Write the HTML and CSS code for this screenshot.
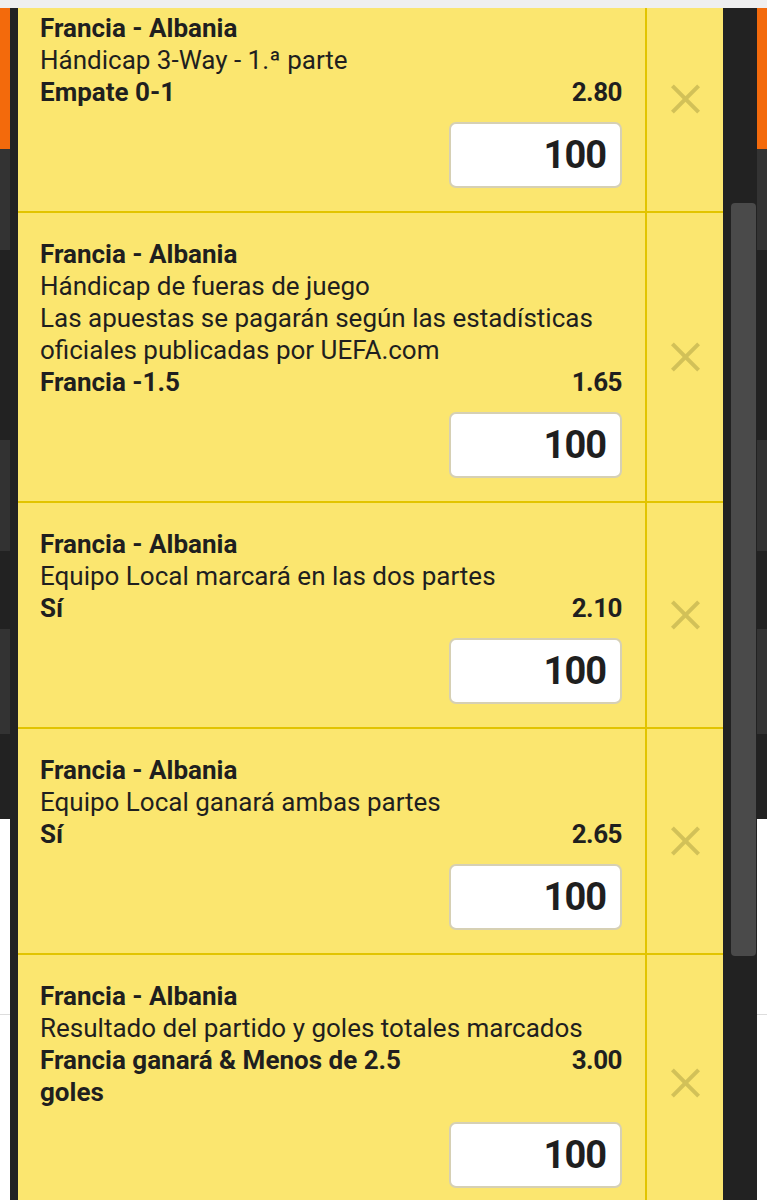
FILE: index.html
```html
<!DOCTYPE html>
<html lang="es">
<head>
  <meta charset="UTF-8" />
  <meta name="viewport" content="width=device-width, initial-scale=1" />
  <title>Boleto de apuestas</title>
  <link rel="stylesheet" href="styles.css">
</head>
<body>

  <div class="topbar"></div>

  <!-- pagina de fondo, oscurecida por el boleto -->
  <div class="page">
    <div class="band orange"></div>
    <div class="band b1"></div>
    <div class="band b2"></div>
    <div class="band b3"></div>
    <div class="band b4"></div>
    <div class="band b5"></div>
    <div class="band b6"></div>
    <div class="band white"></div>
    <div class="band white last"></div>
  </div>

  <div class="overlay">
    <div class="slip">
      <div class="bets">

        <div class="bet">
          <div class="bet-main">
            <div class="match">Francia - Albania</div>
            <div class="market">Hándicap 3-Way - 1.ª parte</div>
            <div class="row">
              <div class="pick">Empate 0-1</div>
              <div class="odds">2.80</div>
            </div>
            <input class="stake" type="text" value="100" />
          </div>
          <div class="bet-remove"><span class="x"></span></div>
        </div>

        <div class="bet">
          <div class="bet-main">
            <div class="match">Francia - Albania</div>
            <div class="market">Hándicap de fueras de juego</div>
            <div class="market">Las apuestas se pagarán según las estadísticas oficiales publicadas por UEFA.com</div>
            <div class="row">
              <div class="pick">Francia -1.5</div>
              <div class="odds">1.65</div>
            </div>
            <input class="stake" type="text" value="100" />
          </div>
          <div class="bet-remove"><span class="x"></span></div>
        </div>

        <div class="bet">
          <div class="bet-main">
            <div class="match">Francia - Albania</div>
            <div class="market">Equipo Local marcará en las dos partes</div>
            <div class="row">
              <div class="pick">Sí</div>
              <div class="odds">2.10</div>
            </div>
            <input class="stake" type="text" value="100" />
          </div>
          <div class="bet-remove"><span class="x"></span></div>
        </div>

        <div class="bet">
          <div class="bet-main">
            <div class="match">Francia - Albania</div>
            <div class="market">Equipo Local ganará ambas partes</div>
            <div class="row">
              <div class="pick">Sí</div>
              <div class="odds">2.65</div>
            </div>
            <input class="stake" type="text" value="100" />
          </div>
          <div class="bet-remove"><span class="x"></span></div>
        </div>

        <div class="bet">
          <div class="bet-main">
            <div class="match">Francia - Albania</div>
            <div class="market">Resultado del partido y goles totales marcados</div>
            <div class="row">
              <div class="pick">Francia ganará &amp; Menos de 2.5 goles</div>
              <div class="odds">3.00</div>
            </div>
            <input class="stake" type="text" value="100" />
          </div>
          <div class="bet-remove"><span class="x"></span></div>
        </div>

      </div>
    </div>
    <div class="scroll-thumb"></div>
  </div>

</body>
</html>
```

FILE: styles.css
```css
html, body {
  margin: 0;
  height: 1200px;
  overflow: hidden;
}
body {
  font-family: Roboto, 'Noto Sans', sans-serif;
  color: #1f1f1f;
  background: #fff;
  position: relative;
}
.topbar {
  height: 8px;
  background: #efefef;
}

/* fondo */
.band { height: 100px; }
.orange { height: 141px; background: #f36a0c; }
.b1 { height: 101px; background: #333; }
.b2 { height: 190px; background: #222; }
.b3 { height: 111px; background: #323232; }
.b4 { height: 78px; background: #222; }
.b5 { height: 105px; background: #333; }
.b6 { height: 85px; background: #222; }
.white { height: 195px; background: #fff; border-bottom: 1px solid #ddd; }
.white.last { height: 200px; border-bottom: none; }

/* boleto */
.overlay {
  position: absolute;
  top: 8px;
  left: 10px;
  right: 10px;
  bottom: 0;
  background: #222;
  padding: 0 34px 0 8px;
}
.slip {
  height: 100%;
  overflow: hidden;
  background: #fbe66f;
}
.bets {
  margin-top: -21px;
}
.bet {
  display: flex;
  border-bottom: 2px solid #e2c400;
}
.bet-main {
  flex: 1;
  padding: 25px 23px 23px 22px;
  display: flex;
  flex-direction: column;
}
.match, .market, .row {
  font-size: 26px;
  line-height: 32px;
}
.match {
  font-weight: 700;
}
.row {
  display: flex;
  justify-content: space-between;
  font-weight: 700;
}
.pick {
  width: 380px;
}
.odds {
  text-align: right;
  letter-spacing: -0.5px;
}
.stake {
  align-self: flex-end;
  margin-top: 14px;
  width: 173px;
  height: 66px;
  box-sizing: border-box;
  border: 2px solid #d6d0b4;
  border-radius: 7px;
  background: #fff;
  padding: 0 14px 0 0;
  text-align: right;
  font-family: Roboto, sans-serif;
  font-size: 38px;
  font-weight: 700;
  letter-spacing: -1px;
  color: #1f1f1f;
}
.bet-remove {
  width: 76px;
  border-left: 2px solid #e2c400;
  display: flex;
  align-items: center;
  justify-content: center;
}
.x {
  position: relative;
  width: 28px;
  height: 28px;
}
.x::before, .x::after {
  content: '';
  position: absolute;
  left: -4px;
  top: 12px;
  width: 37px;
  height: 4px;
  background: #d2c158;
  transform: rotate(45deg);
}
.x::after {
  transform: rotate(-45deg);
}
.scroll-thumb {
  position: absolute;
  top: 195px;
  right: 1px;
  width: 25px;
  height: 753px;
  background: #4a4a4a;
  border-radius: 4px;
}
```
